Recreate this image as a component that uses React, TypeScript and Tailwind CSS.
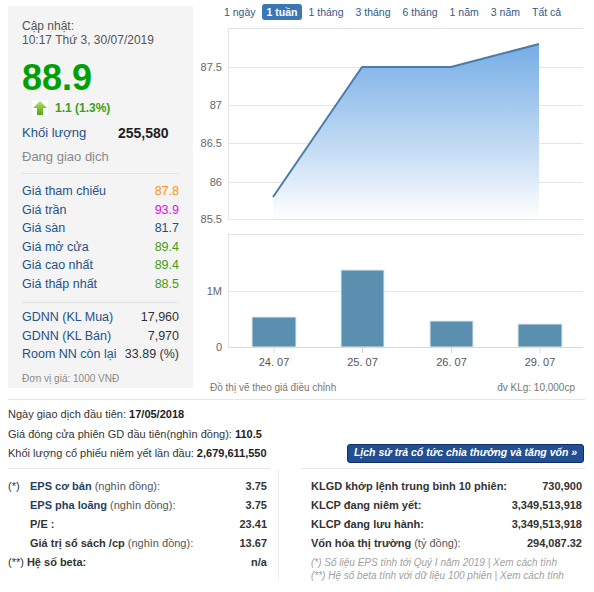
import React from "react";

function PriceRow({ label, value, cls }: { label: string; value: string; cls: string }) {
  return (
    <div className="flex h-[18.6px] items-center justify-between text-[12.5px]">
      <span className="text-[#245288]">{label}</span>
      <span className={cls}>{value}</span>
    </div>
  );
}

function UpArrow() {
  return (
    <svg width="16" height="16" viewBox="0 0 16 16" className="block">
      <defs>
        <linearGradient id="ag" x1="0" y1="0" x2="0" y2="1">
          <stop offset="0" stopColor="#b6e35a" />
          <stop offset="1" stopColor="#4da41c" />
        </linearGradient>
      </defs>
      <rect width="16" height="16" fill="#ffffff" />
      <path d="M8 1 L15 8 L11 8 L11 15 L5 15 L5 8 L1 8 Z" fill="url(#ag)" />
    </svg>
  );
}

const tabs = ["1 ngày", "1 tuần", "1 tháng", "3 tháng", "6 tháng", "1 năm", "3 năm", "Tất cả"];

function Chart() {
  const priceGrid = [
    { y: 43, l: "87.5" },
    { y: 81, l: "87" },
    { y: 119, l: "86.5" },
    { y: 158, l: "86" },
    { y: 195, l: "85.5" },
  ];
  const bars = [
    { x: 59, w: 44, top: 293, l: "24. 07" },
    { x: 148, w: 43, top: 246, l: "25. 07" },
    { x: 237, w: 43, top: 297, l: "26. 07" },
    { x: 325, w: 44, top: 300, l: "29. 07" },
  ];
  return (
    <svg width="401" height="350" className="block" fontFamily="'Liberation Sans', Arial, sans-serif">
      <defs>
        <linearGradient id="pg" x1="0" y1="0" x2="0" y2="1">
          <stop offset="0" stopColor="#75ade6" />
          <stop offset="0.6" stopColor="#c4dcf4" />
          <stop offset="1" stopColor="#ffffff" />
        </linearGradient>
      </defs>
      <line x1="35" y1="4.5" x2="390" y2="4.5" stroke="#e3e3e3" />
      <line x1="35.5" y1="4" x2="35.5" y2="196" stroke="#e3e3e3" />
      {priceGrid.map((g) => (
        <g key={g.l}>
          <line x1="35" y1={g.y + 0.5} x2="390" y2={g.y + 0.5} stroke="#e6e6e6" />
          <text x="29" y={g.y + 4} textAnchor="end" fontSize="11" fill="#666">
            {g.l}
          </text>
        </g>
      ))}
      <polygon points="80,173 169,43 258,43 346,20 346,195 80,195" fill="url(#pg)" />
      <polyline points="80,173 169,43 258,43 346,20" fill="none" stroke="#4a7ca6" strokeWidth="2" strokeLinejoin="round" />
      <line x1="35" y1="210.5" x2="390" y2="210.5" stroke="#e3e3e3" />
      <line x1="35.5" y1="210" x2="35.5" y2="323" stroke="#e3e3e3" />
      <line x1="35" y1="267.5" x2="390" y2="267.5" stroke="#e6e6e6" />
      <text x="29" y="271" textAnchor="end" fontSize="11" fill="#666">
        1M
      </text>
      <text x="29" y="327" textAnchor="end" fontSize="11" fill="#666">
        0
      </text>
      {bars.map((b) => (
        <g key={b.l}>
          <rect x={b.x} y={b.top} width={b.w} height={323 - b.top} fill="#5a8fb0" stroke="#dfe9f0" strokeWidth="1" />
          <line x1={b.x + b.w / 2} y1="323" x2={b.x + b.w / 2} y2="329" stroke="#d8d8d8" />
          <text x={b.x + b.w / 2} y="342" textAnchor="middle" fontSize="11" fill="#555">
            {b.l}
          </text>
        </g>
      ))}
      <line x1="35" y1="323.5" x2="390" y2="323.5" stroke="#d8d8d8" />
    </svg>
  );
}

export default function App() {
  return (
    <div className="relative h-[592px] w-[594px] overflow-hidden bg-white font-['Liberation_Sans',Arial,sans-serif] text-[#333]">
      <div className="flex h-[399px]">
        <div className="ml-[8px] mt-[6px] h-[382px] w-[185px] bg-[#f4f4f4] px-[14px] pt-[13px]">
          <div className="text-[12px] leading-[14px] text-[#555]">
            <div>Cập nhật:</div>
            <div>10:17 Thứ 3, 30/07/2019</div>
          </div>
          <div className="mt-[13px] text-[36px] font-bold leading-[36px] text-[#00a000]">88.9</div>
          <div className="ml-[10px] mt-[4px] flex h-[16px] items-center gap-[7px]">
            <UpArrow />
            <span className="text-[12px] font-bold text-[#3c9e1a]">1.1 (1.3%)</span>
          </div>
          <div className="mt-[9px] flex h-[16px] items-center">
            <span className="w-[96px] text-[13px] text-[#245288]">Khối lượng</span>
            <span className="text-[14px] font-bold text-[#222]">255,580</span>
          </div>
          <div className="mt-[8px] h-[16px] text-[13px] leading-[16px] text-[#8a8a8a]">Đang giao dịch</div>
          <div className="mt-[8px] border-t border-[#e2e2e2]" />
          <div className="mt-[8px]">
            <PriceRow label="Giá tham chiếu" value="87.8" cls="text-[#f7941d]" />
            <PriceRow label="Giá trần" value="93.9" cls="text-[#e010e0]" />
            <PriceRow label="Giá sàn" value="81.7" cls="text-[#1f4f7c]" />
            <PriceRow label="Giá mở cửa" value="89.4" cls="text-[#3c9e1a]" />
            <PriceRow label="Giá cao nhất" value="89.4" cls="text-[#3c9e1a]" />
            <PriceRow label="Giá thấp nhất" value="88.5" cls="text-[#3c9e1a]" />
          </div>
          <div className="mt-[8.5px] border-t border-[#e2e2e2]" />
          <div className="mt-[5px]">
            <PriceRow label="GDNN (KL Mua)" value="17,960" cls="text-[#333]" />
            <PriceRow label="GDNN (KL Bán)" value="7,970" cls="text-[#333]" />
            <PriceRow label="Room NN còn lại" value="33.89 (%)" cls="text-[#333]" />
          </div>
          <div className="mt-[9px] text-[10px] leading-[12px] text-[#8a8a8a]">Đơn vị giá: 1000 VNĐ</div>
        </div>
        <div className="flex w-[401px] flex-col pt-[4px]">
          <div className="ml-[25px] flex h-[16px]">
            {tabs.map((t) =>
              t === "1 tuần" ? (
                <div key={t} className="rounded-[3px] bg-[#3a78b5] px-[5px] text-[10.5px] font-bold leading-[16px] text-white">
                  {t}
                </div>
              ) : (
                <div key={t} className="px-[6px] text-[10.5px] leading-[16px] text-[#2f5a86]">
                  {t}
                </div>
              )
            )}
          </div>
          <div className="mt-[4px]">
            <Chart />
          </div>
          <div className="mt-[8px] flex justify-between pl-[17px] pr-[19px] text-[10px] leading-[12px] text-[#777]">
            <span>Đồ thị vẽ theo giá điều chỉnh</span>
            <span>đv KLg: 10,000cp</span>
          </div>
        </div>
      </div>
      <div className="ml-[8px] w-[577px] border-t border-[#e6e6e6] text-[11px] text-[#333]">
        <div className="flex justify-between">
          <div className="pb-[4px] pt-[5px]">
            <div className="leading-[19.5px]">
              Ngày giao dịch đầu tiên: <b className="text-[#222]">17/05/2018</b>
            </div>
            <div className="leading-[19.5px]">
              Giá đóng cửa phiên GD đầu tiên(nghìn đồng): <b className="text-[#222]">110.5</b>
            </div>
            <div className="leading-[19.5px]">
              Khối lượng cổ phiếu niêm yết lần đầu: <b className="text-[#222]">2,679,611,550</b>
            </div>
          </div>
          <div className="mb-[5px] mr-[1px] flex h-[19px] w-[237px] items-center justify-center self-end rounded-[3px] border border-[#0d2f66] bg-[#214f91] text-[10.5px] font-bold italic text-white">
            Lịch sử trả cổ tức chia thưởng và tăng vốn »
          </div>
        </div>
        <div className="flex">
          <div className="w-[262px] border-t border-[#e6e6e6] pt-[8px]">
            <div className="flex h-[19px] items-center">
              <span className="w-[22px]">(*)</span>
              <b className="text-[#1f3f66]">EPS cơ bản</b>
              <span className="ml-[3px] text-[#555]">(nghìn đồng):</span>
              <b className="ml-auto pr-[3px]">3.75</b>
            </div>
            <div className="flex h-[19px] items-center">
              <span className="w-[22px]"></span>
              <b className="text-[#1f3f66]">EPS pha loãng</b>
              <span className="ml-[3px] text-[#555]">(nghìn đồng):</span>
              <b className="ml-auto pr-[3px]">3.75</b>
            </div>
            <div className="flex h-[19px] items-center">
              <span className="w-[22px]"></span>
              <b>P/E :</b>
              <b className="ml-auto pr-[3px]">23.41</b>
            </div>
            <div className="flex h-[19px] items-center">
              <span className="w-[22px]"></span>
              <b>Giá trị sổ sách /cp</b>
              <span className="ml-[3px] text-[#555]">(nghìn đồng):</span>
              <b className="ml-auto pr-[3px]">13.67</b>
            </div>
            <div className="flex h-[19px] items-center">
              <span>(**)</span>
              <b className="ml-[3px]">Hệ số beta:</b>
              <b className="ml-auto pr-[3px]">n/a</b>
            </div>
          </div>
          <div className="ml-[8px] mt-[2px] h-[110px] w-px bg-[#ebebeb]" />
          <div className="ml-[22px] w-[284px] border-t border-[#e6e6e6] pl-[10px] pr-[3px] pt-[8px]">
            <div className="flex h-[19px] items-center justify-between">
              <b>KLGD khớp lệnh trung bình 10 phiên:</b>
              <b>730,900</b>
            </div>
            <div className="flex h-[19px] items-center justify-between">
              <b>KLCP đang niêm yết:</b>
              <b>3,349,513,918</b>
            </div>
            <div className="flex h-[19px] items-center justify-between">
              <b>KLCP đang lưu hành:</b>
              <b>3,349,513,918</b>
            </div>
            <div className="flex h-[19px] items-center justify-between">
              <span>
                <b>Vốn hóa thị trường</b> <span className="text-[#555]">(tỷ đồng):</span>
              </span>
              <b>294,087.32</b>
            </div>
            <div className="mt-[3px] text-[10px] italic leading-[13px] text-[#a0a0a0]">
              <div>(*) Số liệu EPS tính tới Quý I năm 2019 | Xem cách tính</div>
              <div>(**) Hệ số beta tính với dữ liệu 100 phiên | Xem cách tính</div>
            </div>
          </div>
        </div>
      </div>
    </div>
  );
}
